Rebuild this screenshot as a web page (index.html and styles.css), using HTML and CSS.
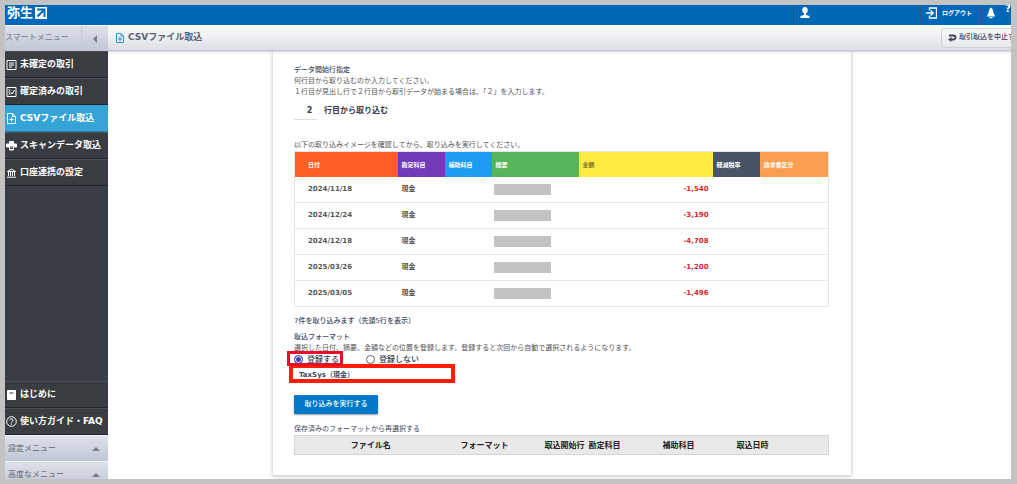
FILE: index.html
```
<!DOCTYPE html>
<html lang="ja">
<head>
    <meta charset="UTF-8">
    <meta name="viewport" content="width=device-width, initial-scale=1.0">
    <title>CSVファイル取込</title>
    <link rel="stylesheet" href="styles.css">
</head>
<body>
    <div class="app">
        <header class="topbar">
            <a class="logo" href="#">弥生
                <svg width="12" height="12" viewBox="0 0 12 12"><rect width="12" height="12" fill="#fff"/><path d="M2 2.5h7.5V10M9.2 2.8L2.5 9.5" fill="none" stroke="#0068b7" stroke-width="2"/></svg>
            </a>
            <a class="top-item user" href="#" aria-label="ユーザー">
                <svg width="10" height="11" viewBox="0 0 10 11"><ellipse cx="5" cy="3.2" rx="2.7" ry="3.2" fill="#fff"/><path d="M4 6h2v2l3.5 1v2h-9V9L4 8z" fill="#fff"/></svg>
            </a>
            <a class="top-item logout" href="#">
                <svg width="11" height="12" viewBox="0 0 11 12"><path d="M3.5 3.5V1h7v10h-7V8.500M0 6h7M4.800 3.500L7.300 6L4.800 8.500" fill="none" stroke="#fff" stroke-width="1.300"/></svg>
                ログアウト
            </a>
            <a class="top-item notice" href="#" aria-label="お知らせ">
                <svg width="10" height="12" viewBox="0 0 10 12"><path d="M5 0.500C3.600 1 3 3 2.600 5.500L0.800 9.500h8.400L7.400 5.500C7 3 6.400 1 5 0.500zM3.500 10h3v1.200h-3z" fill="#fff"/></svg>
            </a>
            <a class="help" href="#">?</a>
        </header>

        <div class="body">
            <nav class="sidebar">
                <div class="menu-head">
                    <span>スマートメニュー</span>
                    <button type="button" aria-label="メニューを閉じる"><i class="tri-left"></i></button>
                </div>
                <a class="menu-item" href="#">
                    <svg width="10" height="10" viewBox="0 0 10 10"><path d="M.5.5h9v9h-9zM2.500 3h5M2.500 5h5M2.500 7h3" /></svg>
                    未確定の取引
                </a>
                <a class="menu-item" href="#">
                    <svg width="10" height="10" viewBox="0 0 10 10"><path d="M.5.5h9v9h-9zM2 3h2M2 5h2M2 7h2M4.500 5.500l1.200 1.500L8 3" /></svg>
                    確定済みの取引
                </a>
                <a class="menu-item current" href="#">
                    <svg width="10" height="11" viewBox="0 0 10 11"><path d="M1 .5h5l3 3v7H1zM6 .5v3h3M5 4.500v4M3 6.500h4" /></svg>
                    CSVファイル取込
                </a>
                <a class="menu-item" href="#">
                    <svg width="10" height="10" viewBox="0 0 10 10"><path d="M3 .5h4v2H3zM0 3h10v3H0zM3 5.500h4V9H3z" fill="#fff" stroke="none"/><path class="dark" d="M3.500 6h3M3.500 7.500h3"/></svg>
                    スキャンデータ取込
                </a>
                <a class="menu-item" href="#">
                    <svg width="10" height="10" viewBox="0 0 10 10"><path d="M1 3.500L5 1l4 2.500zM2 4v4M4 4v4M6 4v4M8 4v4M.5 9.200h9" /></svg>
                    口座連携の設定
                </a>
                <div class="menu-bottom">
                    <a class="menu-item" href="#">
                        <svg width="10" height="10" viewBox="0 0 10 10"><path d="M1 .5h8v9H1z" fill="#fff" stroke="none"/><path class="dark" d="M3 3h4"/></svg>
                        はじめに
                    </a>
                    <a class="menu-item" href="#">
                        <svg width="11" height="11" viewBox="0 0 11 11"><circle cx="5.500" cy="5.500" r="4.800" /><path d="M3.800 4.300C4 2.300 7.200 2.500 7 4.300C6.900 5.300 5.500 5.200 5.500 6.600M5.500 7.500v1" /></svg>
                        使い方ガイド・FAQ
                    </a>
                    <button type="button" class="submenu">設定メニュー<i class="tri-up"></i></button>
                    <button type="button" class="submenu">高度なメニュー<i class="tri-up"></i></button>
                </div>
            </nav>

            <main class="main">
                <div class="title-bar">
                    <svg width="8" height="10" viewBox="0 0 8 10"><path d="M.5.5h4.500l2.500 2.500v6.500h-7zM5 .5V3h2.500M4 4v4M2 6h4" fill="none" stroke="#2f93cf"/></svg>
                    <h1>CSVファイル取込</h1>
                    <button type="button" class="cancel">
                        <svg width="9" height="8" viewBox="0 0 9 8"><path d="M1 1.500h4.500a2 2 0 0 1 0 4H3" fill="none" stroke="#3c4358" stroke-width="1.800"/><path d="M0 5.500l3.500-2.500v5z" fill="#3c4358"/></svg>
                        取引取込を中止する
                    </button>
                </div>

                <form class="card">
                    <h2>データ開始行指定</h2>
                    <p>何行目から取り込むのか入力してください。<br>１行目が見出し行で２行目から取引データが始まる場合は、「２」を入力します。</p>
                    <div class="start-row">
                        <input id="start" type="text" value="2">
                        <label for="start">行目から取り込む</label>
                    </div>

                    <p>以下の取り込みイメージを確認してから、取り込みを実行してください。</p>
                    <table class="preview">
                        <colgroup>
                            <col class="w-date"><col class="w-s"><col class="w-s"><col class="w-memo"><col class="w-amount"><col class="w-s"><col class="w-kubun">
                        </colgroup>
                        <thead>
                            <tr>
                                <th class="date">日付</th>
                                <th class="account">勘定科目</th>
                                <th class="sub">補助科目</th>
                                <th class="memo">摘要</th>
                                <th class="amount">金額</th>
                                <th class="rate">軽減税率</th>
                                <th class="kubun">請求書区分</th>
                            </tr>
                        </thead>
                        <tbody>
                            <tr><td>2024/11/18</td><td>現金</td><td></td><td><span class="mask"></span></td><td>-1,540</td><td></td><td></td></tr>
                            <tr><td>2024/12/24</td><td>現金</td><td></td><td><span class="mask"></span></td><td>-3,190</td><td></td><td></td></tr>
                            <tr><td>2024/12/18</td><td>現金</td><td></td><td><span class="mask"></span></td><td>-4,708</td><td></td><td></td></tr>
                            <tr><td>2025/03/26</td><td>現金</td><td></td><td><span class="mask"></span></td><td>-1,200</td><td></td><td></td></tr>
                            <tr><td>2025/03/05</td><td>現金</td><td></td><td><span class="mask"></span></td><td>-1,496</td><td></td><td></td></tr>
                        </tbody>
                    </table>

                    <p class="count">7件を取り込みます（先頭5行を表示）</p>
                    <h2>取込フォーマット</h2>
                    <p>選択した日付、摘要、金額などの位置を登録します。登録すると次回から自動で選択されるようになります。</p>
                    <div class="radios">
                        <label class="marked"><input type="radio" name="save" checked>登録する</label>
                        <label><input type="radio" name="save">登録しない</label>
                    </div>
                    <input class="format-name" type="text" value="TaxSys（現金）" aria-label="フォーマット名">
                    <button type="button" class="submit">取り込みを実行する</button>

                    <p class="saved-label">保存済みのフォーマットから再選択する</p>
                    <table class="saved">
                        <thead>
                            <tr>
                                <th class="s-file">ファイル名</th>
                                <th class="s-format">フォーマット</th>
                                <th class="s-start">取込開始行</th>
                                <th class="s-account">勘定科目</th>
                                <th class="s-account">補助科目</th>
                                <th>取込日時</th>
                            </tr>
                        </thead>
                    </table>
                </form>
            </main>
        </div>
    </div>
</body>
</html>
```
FILE: styles.css
```
* {
    box-sizing: border-box;
}
body {
    margin: 0;
    height: 100vh;
    padding: 5px 6px 5px 5px;
    background: #c3c3c3;
    color: #555;
    font-family: "DejaVu Sans", "Noto Sans CJK JP", sans-serif;
    font-size: 7px;
    line-height: 11px;
    overflow: hidden;
}
a {
    color: inherit;
    text-decoration: none;
}
button, input {
    margin: 0;
    padding: 0;
    border: none;
    background: none;
    color: inherit;
    font: inherit;
}
h1, h2, p {
    margin: 0;
}
svg {
    flex: none;
}
.app {
    display: flex;
    flex-direction: column;
    height: 100%;
    background: #fff;
    overflow: hidden;
}

/* header */
.topbar {
    display: flex;
    flex: none;
    height: 20px;
    background: #0068b7;
    color: #fff;
    font-weight: bold;
    overflow: hidden;
}
.logo {
    display: flex;
    align-items: center;
    gap: 2px;
    height: 15px;
    margin-right: auto;
    padding-left: 2px;
    font-size: 13px;
}
.top-item {
    display: flex;
    align-items: flex-start;
    gap: 5px;
    padding: 2px 5px 0;
    border-left: 1px solid #34577f;
    line-height: 12px;
}
.user {
    width: 127px;
    padding-left: 6px;
}
.logout {
    width: 60px;
    font-size: 6px;
    white-space: nowrap;
}
.help {
    width: 6px;
    margin-left: 4px;
    font-size: 10px;
    line-height: 8px;
}
.body {
    display: flex;
    flex: 1;
    min-height: 0;
}

/* sidebar */
.sidebar {
    display: flex;
    flex-direction: column;
    flex: none;
    width: 103px;
    background: #393d45;
    overflow: hidden;
}
.menu-head {
    display: flex;
    flex: none;
    height: 26px;
    background: linear-gradient(#dde1e8, #c0c6d6);
    border-top: 1px solid #f2f4f7;
    color: #858a99;
    font-size: 8px;
    line-height: 24px;
    font-weight: 500;
}
.menu-head button {
    display: flex;
    align-items: center;
    justify-content: center;
    width: 27px;
    margin-left: auto;
    border-left: 1px solid #c5cad7;
}
.tri-left {
    border: 4px solid transparent;
    border-left: none;
    border-right: 4px solid #777d8c;
}
.tri-up {
    border: 4px solid transparent;
    border-top: none;
    border-bottom: 4px solid #777d8c;
}
.menu-item {
    display: flex;
    flex: none;
    align-items: center;
    gap: 3px;
    height: 27px;
    padding-left: 1px;
    border-top: 1px solid #4b4f58;
    border-bottom: 1px solid #202329;
    background: #393d42;
    color: #fff;
    font-size: 9px;
    font-weight: bold;
    white-space: nowrap;
}
.menu-item svg {
    width: 11px;
}
.menu-item path, .menu-item circle {
    stroke: #fff;
}
.menu-item path:not([fill]), .menu-item circle {
    fill: none;
}
.menu-item .dark {
    stroke: #393d42;
}
.menu-item.current {
    background: #35a3d5;
    border-color: #35a3d5;
    border-bottom-color: #2582af;
}
.menu-bottom {
    flex: none;
    margin-top: auto;
    margin-bottom: -8px;
}
.submenu {
    display: flex;
    align-items: center;
    justify-content: space-between;
    width: 100%;
    height: 26px;
    padding: 0 8px 0 3px;
    background: linear-gradient(#dde1e8, #c0c6d6);
    border-top: 1px solid #f2f4f7;
    color: #757b8b;
    font-size: 8px;
    font-weight: 500;
}

/* main */
.main {
    flex: 1;
    min-width: 0;
    overflow: hidden;
}
.title-bar {
    position: relative;
    display: flex;
    align-items: center;
    gap: 4px;
    height: 26px;
    padding-left: 8px;
    background: linear-gradient(#fefefe, #dcdfe6);
    border-bottom: 1px solid #c4c5ca;
    box-shadow: 0 1px 2px rgba(0, 0, 0, 0.2);
}
.title-bar h1 {
    color: #5c6273;
    font-size: 9px;
}
.cancel {
    display: flex;
    flex: none;
    align-items: center;
    gap: 2px;
    height: 20px;
    margin-left: auto;
    margin-right: -18px;
    padding: 0 6px;
    border: 1px solid #cfd2d9;
    border-radius: 2px;
    background: linear-gradient(#f8f9fa, #e6e8ed);
    color: #3c4358;
    font-weight: 500;
    white-space: nowrap;
}
.card {
    margin: 0 160px 0 165px;
    padding: 14px 22px 20px 21px;
    border-bottom: 1px solid #ddd;
    box-shadow: 0 0 4px rgba(0, 0, 0, 0.3);
}
.card h2 {
    color: #40485c;
    font-size: 7px;
    font-weight: 500;
}
.start-row {
    display: flex;
    gap: 7px;
    height: 18px;
    margin: 4px 0 20px;
    color: #333b52;
    font-size: 8px;
    font-weight: bold;
    line-height: 17px;
}
.start-row input {
    width: 23px;
    padding-left: 8px;
    border-bottom: 1px solid #ddd;
    text-align: center;
}

/* preview table */
.preview {
    width: 100%;
    table-layout: fixed;
    border-collapse: collapse;
    border: 1px solid #e4e4e4;
    font-weight: bold;
}
.w-date { width: 103px; }
.w-s { width: 47px; }
.w-memo { width: 87px; }
.w-amount { width: 134px; }
.w-kubun { width: 69px; }
.preview th {
    height: 25px;
    padding: 0 0 0 4px;
    color: #fff;
    font-size: 6px;
    text-align: left;
    white-space: nowrap;
}
.preview td {
    height: 26px;
    padding: 0 0 0 4px;
    border-bottom: 1px solid #e8e8e8;
}
.preview th:first-child,
.preview td:first-child {
    padding-left: 13px;
}
.preview td:nth-child(4) {
    padding-left: 2px;
}
.preview td:nth-child(5) {
    padding-right: 4px;
    color: #d12a2a;
    text-align: right;
}
.date { background: #ff5f22; }
.account { background: #703cba; }
.sub { background: #1e9cf2; }
.memo { background: #55b559; }
.preview .amount { background: #ffeb42; color: #80752a; }
.rate { background: #485466; }
.kubun { background: #f8a050; }
.mask {
    display: block;
    width: 57px;
    height: 11px;
    background: #c3c3c3;
}

/* format */
.count {
    margin: 9px 0 5px;
    color: #40485c;
    font-weight: 500;
}
.radios {
    display: flex;
    gap: 27px;
    height: 10px;
    color: #333b52;
    font-size: 8px;
    font-weight: 500;
}
.radios label {
    display: flex;
    position: relative;
    align-items: center;
    gap: 4px;
}
.radios input {
    appearance: none;
    width: 9px;
    height: 9px;
    border: 1px solid #666;
    border-radius: 50%;
}
.radios input:checked {
    border-color: #3546b0;
    background: #3546b0;
    box-shadow: inset 0 0 0 1px #fff;
}
.marked::after {
    content: "";
    position: absolute;
    inset: -3px -4px -2px -7px;
    border: 3px solid #e60f28;
}
.format-name {
    display: block;
    width: 166px;
    height: 19px;
    margin-left: -5px;
    padding-left: 6px;
    border: 4px solid #ff1e05;
    color: #40485c;
    font-weight: bold;
}
.submit {
    display: block;
    width: 84px;
    height: 19px;
    margin: 12px 0 10px;
    border-radius: 1px;
    background: #0077c7;
    box-shadow: 0 1px 2px rgba(0, 0, 0, 0.4);
    color: #fff;
    font-weight: 500;
}
.saved-label {
    color: #40485c;
}
.saved {
    width: 100%;
    table-layout: fixed;
    border-collapse: collapse;
    border: 1px solid #d6d6d6;
    background: #e9e9e9;
    color: #222;
    font-size: 8px;
}
.saved th {
    height: 19px;
    padding: 0;
    text-align: center;
    white-space: nowrap;
}
.s-file { width: 152px; }
.s-format { width: 76px; }
.s-start { width: 66px; }
.saved .s-start {
    text-align: right;
    padding-right: 4px;
}
.s-account { width: 74px; }
.saved .s-account, .saved th:last-child {
    text-align: left;
}
```
